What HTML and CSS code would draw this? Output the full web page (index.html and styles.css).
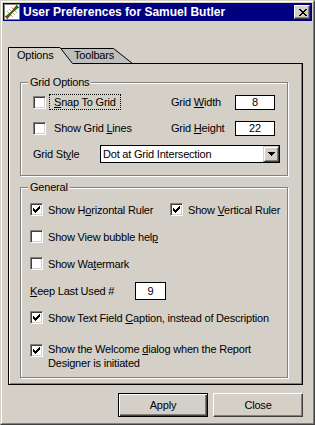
FILE: index.html
```html
<!DOCTYPE html>
<html lang="en">
  <head>
    <meta charset="UTF-8" />
    <title>User Preferences for Samuel Butler</title>
    <link rel="stylesheet" href="styles.css">
  </head>
  <body>
    <div class="window">
      <div class="frame">
        <div class="titlebar">
          <svg class="app-icon" viewBox="0 0 16 16" width="16" height="16">
            <rect x="0.5" y="0.5" width="15" height="15" fill="#fff" stroke="#808080" />
            <path d="M3 7l6 6M5 5l6 6M7 3l6 6" stroke="#a0a0a0" stroke-width="1" fill="none" />
            <path d="M1.5 12 C4 15.5 6 10 8 8 S12 0.5 14.5 4" stroke="#d00000" stroke-width="1.6" fill="none" />
            <path d="M4 14.5 C0.5 12 6 10 8 8 S15.5 4 12 1.5" stroke="#008000" stroke-width="1.6" fill="none" />
          </svg>
          <span class="title">User Preferences for Samuel Butler</span>
          <div class="close-x">
            <svg width="8" height="7" viewBox="0 0 8 7" shape-rendering="crispEdges">
              <path d="M0 0h2v1h-2z M6 0h2v1h-2z M1 1h2v1h-2z M5 1h2v1h-2z M2 2h4v1h-4z M3 3h2v1h-2z M2 4h4v1h-4z M1 5h2v1h-2z M5 5h2v1h-2z M0 6h2v1h-2z M6 6h2v1h-2z" fill="#000" />
            </svg>
          </div>
        </div>

        <div class="content">
          <!-- tab strip -->
          <svg class="tabs" width="295" height="18" viewBox="0 0 295 18">
            <line x1="64" y1="17.5" x2="295" y2="17.5" stroke="#000" />
            <polygon points="52,17.5 52,2.5 105.5,2.5 124.5,17.5" fill="#bebebe" stroke="#000" />
            <polygon points="0,18 0,1 52,1 65,18" fill="#d4d0c8" />
            <path d="M0.5 18 V1.5 H52 L64.5 17.5" fill="none" stroke="#000" />
            <line x1="1.5" y1="2" x2="1.5" y2="18" stroke="#fff" />
            <text x="9" y="13">Options</text>
            <text x="66" y="13">Toolbars</text>
          </svg>

          <div class="panel">
            <div class="group group-grid">
              <div class="group-title">Grid Options</div>
              <div class="row">
                <div class="cell-left">
                  <span class="check"></span>
                  <label class="cap focus"><u>S</u>nap To Grid</label>
                </div>
                <label class="field-label">Grid <u>W</u>idth</label>
                <input class="num" type="text" value="8">
              </div>
              <div class="row">
                <div class="cell-left">
                  <span class="check"></span>
                  <label class="cap">Show Grid <u>L</u>ines</label>
                </div>
                <label class="field-label">Grid <u>H</u>eight</label>
                <input class="num" type="text" value="22">
              </div>
              <div class="row">
                <label class="style-label">Grid St<u>y</u>le</label>
                <div class="combo">
                  <span class="combo-text">Dot at Grid Intersection</span>
                  <span class="combo-btn">
                    <svg width="7" height="4" viewBox="0 0 7 4" shape-rendering="crispEdges">
                      <path d="M0 0h7v1h-1v1h-1v1h-1v1h-1v-1h-1v-1h-1v-1h-1z" fill="#000" />
                    </svg>
                  </span>
                </div>
              </div>
            </div>

            <div class="group group-general">
              <div class="group-title">General</div>
              <div class="row">
                <div class="item-left">
                  <span class="check checked"></span>
                  <label class="text">Show H<u>o</u>rizontal Ruler</label>
                </div>
                <span class="check checked"></span>
                <label class="text">Show <u>V</u>ertical Ruler</label>
              </div>
              <div class="row">
                <span class="check"></span>
                <label class="text">Show View bubble hel<u>p</u></label>
              </div>
              <div class="row">
                <span class="check"></span>
                <label class="text">Show Wa<u>t</u>ermark</label>
              </div>
              <div class="row">
                <label class="keep-label"><u>K</u>eep Last Used #</label>
                <input class="num keep" type="text" value="9">
              </div>
              <div class="row">
                <span class="check checked"></span>
                <label class="text">Show Text Field <u>C</u>aption, instead of Description</label>
              </div>
              <div class="row row-wrap">
                <span class="check checked"></span>
                <label class="text wrap">Show the Welcome <u>d</u>ialog when the Report Designer is initiated</label>
              </div>
            </div>
          </div>

          <div class="buttons">
            <button class="btn btn-default">Apply</button>
            <button class="btn">Close</button>
          </div>
        </div>
      </div>
    </div>
  </body>
</html>
```

FILE: styles.css
```css
body {
  margin: 0;
  font-family: "Liberation Sans", Arial, sans-serif;
  font-size: 11px;
  letter-spacing: -0.2px;
  color: #000;
}
.window {
  width: 315px;
  height: 425px;
  box-sizing: border-box;
  border: 1px solid;
  border-color: #d4d0c8 #404040 #404040 #d4d0c8;
  background-color: #d4d0c8;
}
.frame {
  height: 100%;
  box-sizing: border-box;
  border: 1px solid;
  border-color: #fff #808080 #808080 #fff;
  padding: 1px;
}
.titlebar {
  height: 18px;
  background-color: #000080;
  display: flex;
  align-items: center;
  padding: 0 2px 0 1px;
}
.app-icon {
  display: block;
  margin-right: 3px;
}
.title {
  flex: 1;
  color: #fff;
  font-weight: bold;
  font-size: 12px;
  letter-spacing: 0;
}
.close-x {
  width: 16px;
  height: 14px;
  box-sizing: border-box;
  border: 1px solid;
  border-color: #fff #404040 #404040 #fff;
  box-shadow: inset -1px -1px #808080;
  background-color: #d4d0c8;
  display: flex;
  align-items: center;
  justify-content: center;
  padding-left: 1px;
}
.close-x svg {
  display: block;
}
.content {
  padding: 25px 9px 0 5px;
}
.tabs {
  display: block;
}
.tabs text {
  font-size: 11px;
  fill: #000;
}
.panel {
  height: 321px;
  box-sizing: border-box;
  border: 1px solid #000;
  border-top: 0;
  box-shadow: inset 1px 0 #fff, inset -1px -1px #808080;
  padding: 18px 0 0 11px;
}
.group {
  width: 268px;
  box-sizing: border-box;
  border: 1px solid #808080;
  box-shadow: inset 1px 1px #fff, 1px 1px #fff;
}
.group-grid {
  height: 94px;
  margin-bottom: 11px;
}
.group-general {
  height: 191px;
}
.group-title {
  width: fit-content;
  margin: -7px 0 0 7px;
  padding: 0 2px;
  line-height: 13px;
  background-color: #d4d0c8;
}
.row {
  display: flex;
  align-items: center;
}
.group-grid .row {
  height: 26px;
  padding-left: 12px;
}
.group-grid .row:first-of-type {
  margin-top: 1px;
}
.group-general .row {
  height: 27px;
  padding-left: 9px;
}
.group-general .group-title + .row {
  margin-top: 2px;
}
.check {
  flex: none;
  width: 13px;
  height: 13px;
  box-sizing: border-box;
  border: 1px solid;
  border-color: #808080 #fff #fff #808080;
  box-shadow: inset 1px 1px #404040, inset -1px -1px #d4d0c8;
  background-color: #fff;
}
.check.checked {
  background-image: url("data:image/svg+xml,%3Csvg xmlns='http://www.w3.org/2000/svg' width='7' height='7' viewBox='0 0 7 7' shape-rendering='crispEdges'%3E%3Cpath d='M0 2V5H1V6H2V7H3V6H4V5H5V4H6V3H7V0H6V1H5V2H4V3H3V4H2V3H1V2Z' fill='%23000'/%3E%3C/svg%3E");
  background-repeat: no-repeat;
  background-position: 2px 2px;
}
.cell-left {
  width: 138px;
  display: flex;
  align-items: center;
}
.cap {
  margin-left: 3px;
  padding: 0 4px;
  line-height: 14px;
  border: 1px solid transparent;
}
.cap.focus {
  border: 1px dotted #000;
}
.field-label {
  width: 64px;
}
.num {
  width: 40px;
  height: 15px;
  box-sizing: border-box;
  border: 1px solid #000;
  padding: 0;
  margin: 0;
  background-color: #fff;
  font: inherit;
  letter-spacing: inherit;
  text-align: center;
  color: #000;
}
.style-label {
  width: 67px;
}
.combo {
  width: 180px;
  height: 18px;
  box-sizing: border-box;
  border: 1px solid #000;
  background-color: #fff;
  display: flex;
  align-items: center;
}
.combo-text {
  flex: 1;
  padding-left: 2px;
}
.combo-btn {
  width: 16px;
  height: 16px;
  box-sizing: border-box;
  border: 1px solid;
  border-color: #d4d0c8 #404040 #404040 #d4d0c8;
  box-shadow: inset 1px 1px #fff, inset -1px -1px #808080;
  background-color: #d4d0c8;
  display: flex;
  align-items: center;
  justify-content: center;
}
.combo-btn svg {
  display: block;
}
.item-left {
  width: 140px;
  display: flex;
  align-items: center;
}
.text {
  margin-left: 5px;
  line-height: 14px;
}
.keep-label {
  width: 105px;
}
.num.keep {
  width: 31px;
  height: 18px;
}
.group-general .row.row-wrap {
  height: auto;
  align-items: flex-start;
  padding-top: 11px;
}
.row-wrap .check {
  margin-top: 2px;
}
.text.wrap {
  width: 215px;
}
.buttons {
  display: flex;
  justify-content: flex-end;
  gap: 5px;
  margin-top: 8px;
}
.btn {
  width: 90px;
  height: 24px;
  box-sizing: border-box;
  border: 1px solid;
  border-color: #fff #404040 #404040 #fff;
  box-shadow: inset -1px -1px #808080;
  background-color: #d4d0c8;
  font: inherit;
  letter-spacing: inherit;
  color: #000;
  padding: 0;
}
.btn-default {
  border: 1px solid #000;
  box-shadow: inset 1px 1px #fff, inset -1px -1px #404040, inset -2px -2px #808080;
}
```
